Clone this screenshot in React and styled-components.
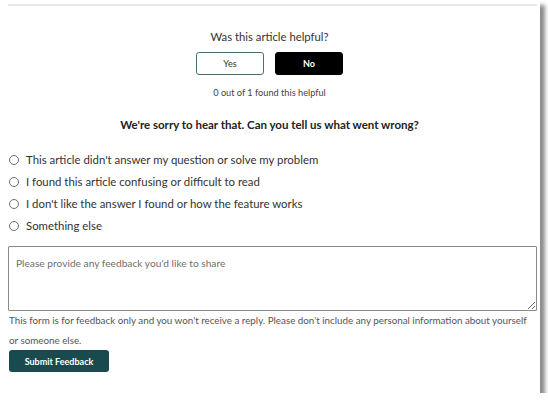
import styled, { createGlobalStyle } from 'styled-components';

const GlobalStyle = createGlobalStyle`
  html, body {
    margin: 0;
    padding: 0;
    background: #ffffff;
  }
  body {
    font-family: Lato, "Open Sans", "Liberation Sans", sans-serif;
    color: #2b2b2b;
  }
`;

const reasons = [
  "This article didn't answer my question or solve my problem",
  'I found this article confusing or difficult to read',
  "I don't like the answer I found or how the feature works",
  'Something else',
];

export default function App() {
  return (
    <>
      <GlobalStyle />
      <Card>
        <Rule />
        <Helpful>
          <Question>Was this article helpful?</Question>
          <ButtonRow>
            <VoteButton type="button">Yes</VoteButton>
            <VoteButton type="button" $active>
              No
            </VoteButton>
          </ButtonRow>
          <Count>0 out of 1 found this helpful</Count>
        </Helpful>
        <Sorry>We're sorry to hear that. Can you tell us what went wrong?</Sorry>
        <Options>
          {reasons.map(r => (
            <Option key={r}>
              <Radio type="radio" name="reason" />
              <span>{r}</span>
            </Option>
          ))}
        </Options>
        <Feedback placeholder="Please provide any feedback you'd like to share" />
        <Note>
          This form is for feedback only and you won't receive a reply. Please
          don't include any personal information about yourself or someone
          else.
        </Note>
        <Submit type="button">Submit Feedback</Submit>
      </Card>
    </>
  );
}

const Card = styled.div`
  width: 540px;
  height: 393px;
  box-sizing: border-box;
  background: #fff;
  padding: 4px 11px 0 8px;
  box-shadow: 5px 5px 4px rgba(0, 0, 0, 0.45);
  display: flex;
  flex-direction: column;
`;

const Rule = styled.div`
  height: 2px;
  background: #e8e8e8;
  width: 529px;
`;

const Helpful = styled.div`
  display: flex;
  flex-direction: column;
  align-items: center;
  padding-top: 22px;
  padding-left: 2px;
`;

const Question = styled.div`
  font-size: 11.3px;
  line-height: 18px;
  color: #333;
`;

const ButtonRow = styled.div`
  display: flex;
  gap: 11px;
  margin-top: 6px;
`;

const VoteButton = styled.button`
  width: 68px;
  height: 23px;
  box-sizing: border-box;
  border-radius: 3px;
  font-family: inherit;
  font-size: 9px;
  font-weight: ${p => (p.$active ? 700 : 400)};
  border: 1px solid ${p => (p.$active ? '#000' : '#4c6b72')};
  background: ${p => (p.$active ? '#000' : '#fff')};
  color: ${p => (p.$active ? '#fff' : '#333')};
  padding: 0;
`;

const Count = styled.div`
  font-size: 9.2px;
  line-height: 11px;
  color: #444;
  margin-top: 12px;
`;

const Sorry = styled.div`
  text-align: center;
  font-size: 11.5px;
  line-height: 16px;
  font-weight: 700;
  color: #222;
  margin-top: 19px;
  padding-left: 2px;
`;

const Options = styled.div`
  display: flex;
  flex-direction: column;
  gap: 5px;
  margin-top: 18px;
`;

const Option = styled.label`
  display: flex;
  align-items: center;
  gap: 7px;
  font-size: 11.4px;
  line-height: 17px;
  color: #333;
`;

const Radio = styled.input`
  appearance: none;
  width: 10px;
  height: 10px;
  margin: 0 0 0 1px;
  border: 1px solid #707070;
  border-radius: 50%;
  box-sizing: border-box;
`;

const Feedback = styled.textarea`
  margin-top: 12px;
  width: 529px;
  height: 65px;
  box-sizing: border-box;
  border: 1px solid #8a8a8a;
  border-radius: 1px;
  padding: 10px 7px;
  font-family: inherit;
  font-size: 10.2px;
  color: #333;

  &::placeholder {
    color: #6f6f6f;
  }
`;

const Note = styled.p`
  margin: -1px 0 0 1px;
  font-size: 9.8px;
  line-height: 20px;
  color: #555;
`;

const Submit = styled.button`
  align-self: flex-start;
  margin-left: 1px;
  width: 100px;
  height: 22px;
  border: none;
  border-radius: 3px;
  background: #184a4e;
  color: #fff;
  font-family: inherit;
  font-size: 9px;
  font-weight: 700;
  padding: 0;
`;
